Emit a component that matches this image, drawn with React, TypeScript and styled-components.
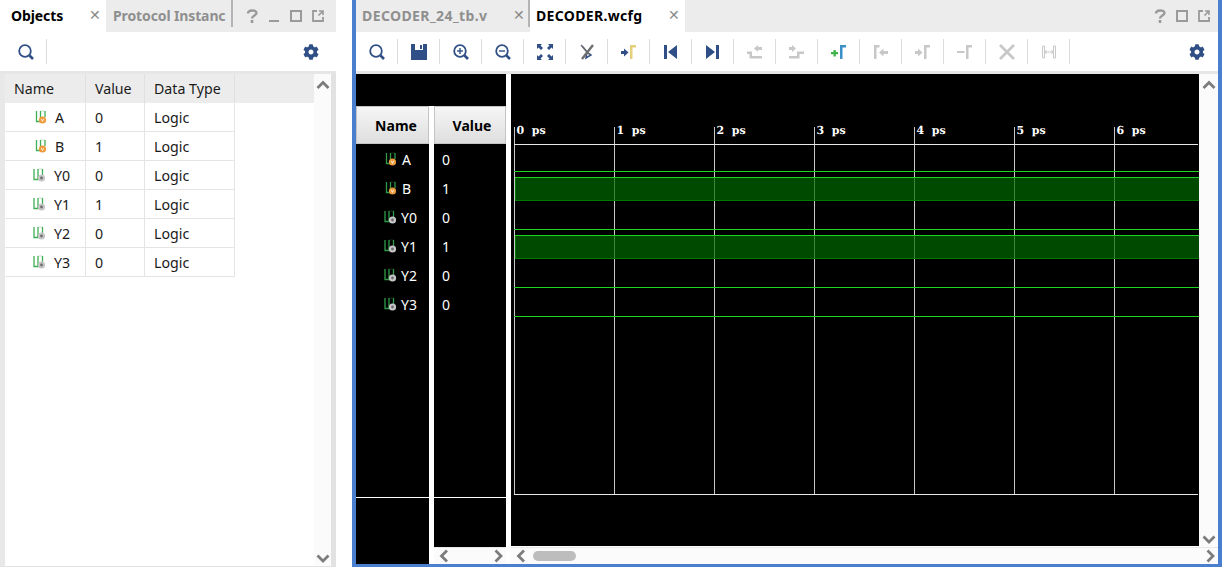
import React from 'react';
import styled, { createGlobalStyle } from 'styled-components';
import { FaCog } from 'react-icons/fa';

const GlobalStyle = createGlobalStyle`
  html, body {
    margin: 0;
    padding: 0;
    background: #fff;
    overflow: hidden;
  }
  body {
    font-family: "Noto Sans", "Open Sans", sans-serif;
  }
`;

const Page = styled.div`
  display: flex;
  width: 1222px;
  height: 567px;
  background: #fff;
`;

const ObjectsPanel = styled.section`
  display: flex;
  flex-direction: column;
  width: 336px;
  height: 566px;
  margin-right: 16px;
  border-bottom: 1px solid #e2e2e2;
`;

const WavePanel = styled.section`
  display: flex;
  flex-direction: column;
  width: 870px;
  height: 564px;
  border-left: 4px solid #4a7fcf;
  border-right: 4px solid #4a7fcf;
  border-bottom: 3px solid #4a7fcf;
`;

const TabBar = styled.div`
  display: flex;
  align-items: flex-start;
  height: 32px;
  flex: none;
  background: #ececec;
  overflow: hidden;
`;

const Tab = styled.div<{
  $width: number;
  $active?: boolean;
  $pad: number;
  $closePad?: number;
  $track?: number;
}>`
  display: flex;
  align-items: center;
  justify-content: space-between;
  box-sizing: border-box;
  flex: none;
  width: ${(p) => p.$width}px;
  height: 32px;
  padding: 0 ${(p) => p.$closePad ?? 5}px 2px ${(p) => p.$pad}px;
  background: ${(p) => (p.$active ? '#fff' : 'transparent')};
  color: ${(p) => (p.$active ? '#000' : '#8f8f8f')};
  font-size: 14px;
  font-weight: 700;
  letter-spacing: ${(p) => p.$track ?? 0}px;
  white-space: nowrap;
  overflow: hidden;
`;

const TabClose = styled.span`
  color: #8a8a8a;
  font-size: 14px;
  font-weight: 400;
  letter-spacing: 0;
  line-height: 1;
`;

const TabDivider = styled.div`
  flex: none;
  width: 2px;
  height: 27px;
  background: #b4b4b4;
`;

const WindowButtons = styled.div<{ $right: number }>`
  display: flex;
  align-items: center;
  gap: 10px;
  height: 32px;
  margin-left: auto;
  padding-right: ${(p) => p.$right}px;
`;

const Toolbar = styled.div<{ $inset?: number }>`
  display: flex;
  align-items: center;
  flex: none;
  box-sizing: border-box;
  height: 39px;
  margin-left: ${(p) => p.$inset ?? 0}px;
  background: #fff;
`;

const ToolButton = styled.div`
  display: flex;
  align-items: center;
  justify-content: center;
  flex: none;
  box-sizing: border-box;
  width: 42px;
  height: 25px;
  border-right: 1px solid #dcdcdc;
`;

const GearButton = styled.div<{ $right: number }>`
  display: flex;
  margin-left: auto;
  margin-right: ${(p) => p.$right}px;
  color: #2f4f86;
`;

const GreyStrip = styled.div`
  flex: none;
  height: 3px;
  background: #e6e6e6;
`;

const ObjectsBody = styled.div`
  display: flex;
  flex: 1;
  min-height: 0;
  border-left: 5px solid #e8e8e8;
  border-right: 5px solid #e2e2e2;
`;

const ObjectsTableArea = styled.div`
  flex: 1;
  background: #fff;
`;

const TableGrid = styled.div`
  display: grid;
  grid-template-columns: 81px 59px 90px 79px;
  grid-auto-rows: 29px;
  font-size: 14.2px;
  color: #1a1a1a;
`;

const HeadCell = styled.div<{ $last?: boolean }>`
  display: flex;
  align-items: center;
  box-sizing: border-box;
  padding-left: ${(p) => (p.$last ? 0 : 9)}px;
  background: #ececec;
  border-right: ${(p) => (p.$last ? 'none' : '1px solid #e0e0e0')};
`;

const Cell = styled.div<{ $indent?: number }>`
  display: flex;
  align-items: center;
  box-sizing: border-box;
  padding-left: ${(p) => p.$indent ?? 9}px;
  border-right: 1px solid #e4e4e4;
  border-bottom: 1px solid #e4e4e4;
`;

const NameLabel = styled.span<{ $gap: number }>`
  margin-left: ${(p) => p.$gap}px;
`;

const Scrollbar = styled.div<{ $width: number }>`
  display: flex;
  flex-direction: column;
  align-items: center;
  justify-content: space-between;
  flex: none;
  box-sizing: border-box;
  width: ${(p) => p.$width}px;
  padding: 4px 0 1px;
  background: #fbfbfb;
`;

const WaveBody = styled.div`
  display: flex;
  flex: 1;
  min-height: 0;
`;

const SignalPane = styled.div`
  display: flex;
  flex-direction: column;
  flex: none;
  width: 150px;
  margin-right: 5px;
`;

const HeaderGap = styled.div`
  flex: none;
  height: 32px;
  background: #000;
`;

const SignalColumns = styled.div`
  display: flex;
  flex: 1;
  min-height: 0;
  gap: 5px;
`;

const NameColumn = styled.div`
  display: flex;
  flex-direction: column;
  flex: none;
  width: 73px;
  background: #000;
`;

const ValueStack = styled.div`
  display: flex;
  flex-direction: column;
  flex: none;
  width: 72px;
`;

const ValueColumn = styled.div`
  display: flex;
  flex-direction: column;
  flex: 1;
  background: #000;
`;

const ColumnHeader = styled.div<{ $shift: number }>`
  display: flex;
  align-items: center;
  justify-content: center;
  flex: none;
  box-sizing: border-box;
  height: 38px;
  padding-left: ${(p) => p.$shift}px;
  background: linear-gradient(#f6f6f6, #dedede);
  border: 1px solid #c4c4c4;
  color: #000;
  font-size: 14px;
  font-weight: 700;
`;

const SignalRows = styled.div`
  flex: none;
  height: 353px;
  border-bottom: 1px solid #fff;
`;

const SignalRow = styled.div<{ $pad: number }>`
  display: flex;
  align-items: center;
  box-sizing: border-box;
  height: 29px;
  padding: 1px 0 0 ${(p) => p.$pad}px;
  color: #fff;
  font-size: 14px;
`;

const HorizontalBar = styled.div`
  display: flex;
  align-items: center;
  justify-content: space-between;
  flex: none;
  box-sizing: border-box;
  height: 17px;
  padding: 0 1px 0 3px;
  background: #fbfbfb;
  border-top: 1px solid #e8e8e8;
`;

const WaveStack = styled.div`
  display: flex;
  flex-direction: column;
  flex: 1;
  min-width: 0;
`;

const WaveRow = styled.div`
  display: flex;
  flex: 1;
  min-height: 0;
`;

const WaveCanvas = styled.svg`
  display: block;
  flex: none;
  background: #000;
`;

const RulerLabel = styled.text`
  fill: #fff;
  font-family: "DejaVu Serif", "Liberation Serif", serif;
  font-size: 11px;
  font-weight: 700;
  white-space: pre;
`;

const Thumb = styled.div`
  width: 43px;
  height: 10px;
  margin-left: 5px;
  margin-right: auto;
  border-radius: 5px;
  background: #bdbdbd;
`;

const BLUE = '#2f4f86';
const OFF = '#c8c8c8';

type Chevron = 'up' | 'down' | 'left' | 'right';

const chevronPaths: Record<Chevron, string> = {
  up: 'M1.5 10 L7 4.5 L12.5 10',
  down: 'M1.5 4.5 L7 10 L12.5 4.5',
  left: 'M10 1.5 L4.5 7 L10 12.5',
  right: 'M4.5 1.5 L10 7 L4.5 12.5',
};

function Chev({ dir }: { dir: Chevron }) {
  return (
    <svg width="14" height="14" viewBox="0 0 14 14" fill="none">
      <path d={chevronPaths[dir]} stroke="#7c7c7c" strokeWidth="2.8" />
    </svg>
  );
}

function Glass({ mark }: { mark?: 'plus' | 'minus' }) {
  return (
    <svg width="18" height="18" viewBox="0 0 18 18" fill="none" stroke={BLUE}>
      <circle cx="8" cy="8" r="5.8" strokeWidth="1.8" />
      <path d="M12.5 12.5 L16 16" strokeWidth="2.6" />
      {mark && <path d="M5 8 H11" strokeWidth="1.4" />}
      {mark === 'plus' && <path d="M8 5 V11" strokeWidth="1.4" />}
    </svg>
  );
}

function Save() {
  return (
    <svg width="16" height="16" viewBox="0 0 16 16">
      <path fill={BLUE} d="M0 0 H16 V16 H0 Z" />
      <path fill="#fff" d="M4 0 H12 V6 H4 Z" />
      <path fill={BLUE} d="M9 1 H11 V5 H9 Z" />
    </svg>
  );
}

function Fit() {
  return (
    <svg width="16" height="16" viewBox="0 0 16 16" fill={BLUE}>
      <path d="M0 0 H5 L3.5 1.5 L6 4 L4 6 L1.5 3.5 L0 5 Z" />
      <path d="M16 0 H11 L12.5 1.5 L10 4 L12 6 L14.5 3.5 L16 5 Z" />
      <path d="M0 16 H5 L3.5 14.5 L6 12 L4 10 L1.5 12.5 L0 11 Z" />
      <path d="M16 16 H11 L12.5 14.5 L10 12 L12 10 L14.5 12.5 L16 11 Z" />
    </svg>
  );
}

function CursorOff() {
  return (
    <svg width="18" height="18" viewBox="0 0 18 18" fill="none">
      <path d="M4 3 L9 9 L8 15 L13 12 L9 9" stroke="#2f4f86" strokeWidth="1.5" />
      <path d="M15 2 L4 16" stroke="#6f6f6f" strokeWidth="2.4" />
      <path d="M3 2 L12 12" stroke="#6f6f6f" strokeWidth="1.4" />
    </svg>
  );
}

function MarkerIn({ colour, arrow }: { colour: string; arrow: string }) {
  return (
    <svg width="16" height="16" viewBox="0 0 16 16">
      <path fill={colour} d="M9 1 H15 V3.5 H11.5 V15 H9 Z" />
      <path fill={arrow} d="M0 7 H3 V4.5 L7.5 8.5 L3 12.5 V10 H0 Z" />
    </svg>
  );
}

function StepEdge({ side }: { side: 'left' | 'right' }) {
  const d =
    side === 'left'
      ? 'M1 1 H4 V15 H1 Z M14 1 V15 L5 8 Z'
      : 'M11 1 H14 V15 H11 Z M1 1 V15 L10 8 Z';
  return (
    <svg width="16" height="16" viewBox="0 0 16 16">
      <path fill={BLUE} d={d} />
    </svg>
  );
}

function EdgeJump({ flip }: { flip?: boolean }) {
  return (
    <svg width="18" height="14" viewBox="0 0 18 14">
      {flip ? (
        <path fill={OFF} d="M1 2 H4 V0 L8 3.5 L4 7 V5 H1 Z M1 11 H9 V6.5 H16 V9 H11.5 V13.5 H1 Z" />
      ) : (
        <path fill={OFF} d="M16 2 H12 V0 L8 3.5 L12 7 V5 H16 Z M1 6.5 H6 V11 H16 V13.5 H3.5 V9 H1 Z" />
      )}
    </svg>
  );
}

function AddMarker() {
  return (
    <svg width="16" height="16" viewBox="0 0 16 16">
      <path fill="#3a8fc7" d="M9 1 H15 V3.5 H11.5 V15 H9 Z" />
      <path fill="#3fb54a" d="M2.5 6 H4.8 V8 H7 V10.2 H4.8 V12.4 H2.5 V10.2 H0 V8 H2.5 Z" />
    </svg>
  );
}

function MarkerArrowBack() {
  return (
    <svg width="16" height="16" viewBox="0 0 16 16">
      <path fill={OFF} d="M1 1 H6.5 V3.5 H3.5 V15 H1 Z" />
      <path fill={OFF} d="M15 7 H10.5 V4.5 L6 8.5 L10.5 12.5 V10 H15 Z" />
    </svg>
  );
}

function MarkerRemove() {
  return (
    <svg width="16" height="16" viewBox="0 0 16 16">
      <path fill={OFF} d="M9 1 H15 V3.5 H11.5 V15 H9 Z" />
      <path fill={OFF} d="M0 7 H7.5 V9 H0 Z" />
    </svg>
  );
}

function DeleteAll() {
  return (
    <svg width="16" height="16" viewBox="0 0 16 16" fill="none">
      <path d="M1 1 L15 15 M15 1 L1 15" stroke={OFF} strokeWidth="2.8" />
    </svg>
  );
}

function Span() {
  return (
    <svg width="16" height="14" viewBox="0 0 16 14" fill="none" stroke={OFF}>
      <path d="M1.5 1 V13 H3.5 V1 Z M12.5 1 V13 H14.5 V1 Z" />
      <path d="M4 7 H12 M5.5 5 L4 7 L5.5 9 M10.5 5 L12 7 L10.5 9" />
    </svg>
  );
}

function Help() {
  return (
    <svg width="12" height="14" viewBox="0 0 12 14" fill="none" stroke="#9a9a9a">
      <path d="M2 4.5 C2 0.5 10.5 0.5 10.5 4 C10.5 6.5 6 6.5 6 9.5" strokeWidth="2.4" />
      <path d="M6 11 V14" strokeWidth="2.6" />
    </svg>
  );
}

function Minimise() {
  return (
    <svg width="12" height="12" viewBox="0 0 12 12">
      <path fill="#9a9a9a" d="M1 10 H11 V12 H1 Z" />
    </svg>
  );
}

function Maximise() {
  return (
    <svg width="12" height="12" viewBox="0 0 12 12" fill="none">
      <path d="M1 1 H11 V11 H1 Z" stroke="#9a9a9a" strokeWidth="2" />
    </svg>
  );
}

function PopOut() {
  return (
    <svg width="12" height="12" viewBox="0 0 12 12" fill="none" stroke="#9a9a9a">
      <path d="M5 1 H1 V11 H11 V7" strokeWidth="1.8" />
      <path d="M7 1 H11 V5 M11 1 L6.5 5.5" strokeWidth="1.6" />
    </svg>
  );
}

function SignalIcon({ input, dim }: { input: boolean; dim?: boolean }) {
  const wire = dim ? '#2f9a48' : '#3fae55';
  const cx = input ? 7.5 : 8.5;
  const shift = input ? 0.5 : 0;
  return (
    <svg width="13" height="15" viewBox="0 0 13 15" fill="none">
      <path
        d={`M${1 + shift} 1 V11.5 H${5 + shift} V1 M${9.5 + shift} 1 V7`}
        stroke={wire}
        strokeWidth="1.3"
      />
      <path d={`M${5 + shift} 1 H${9.5 + shift}`} stroke={wire} strokeWidth="0.6" opacity="0.5" />
      <circle cx={cx} cy="10" r="3.6" fill={input ? '#ee9a3a' : '#c6c6c6'} />
      {input ? (
        <path d="M6.3 8.8 L7.5 11.5 L8.7 8.8" stroke="#fff" strokeWidth="0.8" />
      ) : (
        <circle cx={cx} cy="10" r="1.4" fill="#6d6d6d" />
      )}
    </svg>
  );
}

const signals = [
  { name: 'A', value: '0', input: true, type: 'Logic' },
  { name: 'B', value: '1', input: true, type: 'Logic' },
  { name: 'Y0', value: '0', input: false, type: 'Logic' },
  { name: 'Y1', value: '1', input: false, type: 'Logic' },
  { name: 'Y2', value: '0', input: false, type: 'Logic' },
  { name: 'Y3', value: '0', input: false, type: 'Logic' },
];

const tools = [
  <Glass key="find" />,
  <Save key="save" />,
  <Glass key="in" mark="plus" />,
  <Glass key="out" mark="minus" />,
  <Fit key="fit" />,
  <CursorOff key="cursor" />,
  <MarkerIn key="goto" colour="#e6cf7a" arrow={BLUE} />,
  <StepEdge key="first" side="left" />,
  <StepEdge key="last" side="right" />,
  <EdgeJump key="prev" />,
  <EdgeJump key="next" flip />,
  <AddMarker key="add" />,
  <MarkerArrowBack key="mprev" />,
  <MarkerIn key="mnext" colour={OFF} arrow={OFF} />,
  <MarkerRemove key="mdel" />,
  <DeleteAll key="del" />,
  <Span key="span" />,
];

// chart coordinates are relative to the top left of the black wave area
const TICKS = [0, 1, 2, 3, 4, 5, 6];
const tickX = (i: number) => 3.5 + i * 100;
const GRID_TOP = 53;
const GRID_BOTTOM = 420.5;
const CHART_RIGHT = 687;
const lowLines = [97.5, 155.5, 213.5, 242.5];
const highBands = [103.5, 161.5];

function WaveChart() {
  return (
    <WaveCanvas width={688} height={472} viewBox="0 0 688 472" shapeRendering="crispEdges">
      {TICKS.map((i) => (
        <g key={i}>
          <line x1={tickX(i)} x2={tickX(i)} y1={GRID_TOP} y2={GRID_BOTTOM} stroke="#c8c8c8" />
          <RulerLabel x={tickX(i) + 2} y={60} textRendering="geometricPrecision">
            {`${i}  ps`}
          </RulerLabel>
        </g>
      ))}
      <line x1={3} x2={CHART_RIGHT} y1={70.5} y2={70.5} stroke="#e8e8e8" />
      <line x1={3} x2={CHART_RIGHT} y1={GRID_BOTTOM} y2={GRID_BOTTOM} stroke="#e8e8e8" />
      {lowLines.map((y) => (
        <line key={y} x1={3} x2={CHART_RIGHT + 1} y1={y} y2={y} stroke="#1fd41f" />
      ))}
      {highBands.map((y) => (
        <g key={y}>
          <rect x={4.5} y={y} width={684} height={23} fill="#006a00" fillOpacity="0.7" stroke="#007a00" />
          <line x1={4} x2={CHART_RIGHT + 1} y1={y} y2={y} stroke="#1fd41f" />
        </g>
      ))}
    </WaveCanvas>
  );
}

export default function App() {
  return (
    <Page>
      <GlobalStyle />
      <ObjectsPanel>
        <TabBar>
          <Tab $width={106} $pad={11} $track={-0.1} $active>
            Objects
            <TabClose>✕</TabClose>
          </Tab>
          <Tab $width={125} $pad={7} $track={-0.12}>
            Protocol Instanc
          </Tab>
          <TabDivider />
          <WindowButtons $right={12}>
            <Help />
            <Minimise />
            <Maximise />
            <PopOut />
          </WindowButtons>
        </TabBar>
        <Toolbar $inset={5}>
          <ToolButton>
            <Glass />
          </ToolButton>
          <GearButton $right={17}>
            <FaCog size={16} />
          </GearButton>
        </Toolbar>
        <GreyStrip />
        <ObjectsBody>
          <ObjectsTableArea>
            <TableGrid>
              <HeadCell>Name</HeadCell>
              <HeadCell>Value</HeadCell>
              <HeadCell>Data Type</HeadCell>
              <HeadCell $last />
              {signals.map((s) => (
                <React.Fragment key={s.name}>
                  <Cell $indent={s.input ? 30 : 28}>
                    <SignalIcon input={s.input} />
                    <NameLabel $gap={s.input ? 7 : 8}>{s.name}</NameLabel>
                  </Cell>
                  <Cell>{s.value}</Cell>
                  <Cell>{s.type}</Cell>
                  <div />
                </React.Fragment>
              ))}
            </TableGrid>
          </ObjectsTableArea>
          <Scrollbar $width={17}>
            <Chev dir="up" />
            <Chev dir="down" />
          </Scrollbar>
        </ObjectsBody>
      </ObjectsPanel>

      <WavePanel>
        <TabBar>
          <Tab $width={172} $pad={6} $closePad={3} $track={0.4}>
            DECODER_24_tb.v
            <TabClose>✕</TabClose>
          </Tab>
          <TabDivider />
          <Tab $width={155} $pad={6} $closePad={5} $track={0.33} $active>
            DECODER.wcfg
            <TabClose>✕</TabClose>
          </Tab>
          <WindowButtons $right={8}>
            <Help />
            <Maximise />
            <PopOut />
          </WindowButtons>
        </TabBar>
        <Toolbar>
          {tools.map((t) => (
            <ToolButton key={t.key}>{t}</ToolButton>
          ))}
          <GearButton $right={13}>
            <FaCog size={16} />
          </GearButton>
        </Toolbar>
        <GreyStrip />
        <WaveBody>
          <SignalPane>
            <HeaderGap />
            <SignalColumns>
              <NameColumn>
                <ColumnHeader $shift={7}>Name</ColumnHeader>
                <SignalRows>
                  {signals.map((s) => (
                    <SignalRow key={s.name} $pad={s.input ? 29 : 28}>
                      <SignalIcon input={s.input} dim />
                      <NameLabel $gap={4}>{s.name}</NameLabel>
                    </SignalRow>
                  ))}
                </SignalRows>
              </NameColumn>
              <ValueStack>
                <ValueColumn>
                  <ColumnHeader $shift={4}>Value</ColumnHeader>
                  <SignalRows>
                    {signals.map((s) => (
                      <SignalRow key={s.name} $pad={8}>
                        {s.value}
                      </SignalRow>
                    ))}
                  </SignalRows>
                </ValueColumn>
                <HorizontalBar>
                  <Chev dir="left" />
                  <Chev dir="right" />
                </HorizontalBar>
              </ValueStack>
            </SignalColumns>
          </SignalPane>
          <WaveStack>
            <WaveRow>
              <WaveChart />
              <Scrollbar $width={19}>
                <Chev dir="up" />
                <Chev dir="down" />
              </Scrollbar>
            </WaveRow>
            <HorizontalBar>
              <Chev dir="left" />
              <Thumb />
              <Chev dir="right" />
            </HorizontalBar>
          </WaveStack>
        </WaveBody>
      </WavePanel>
    </Page>
  );
}
